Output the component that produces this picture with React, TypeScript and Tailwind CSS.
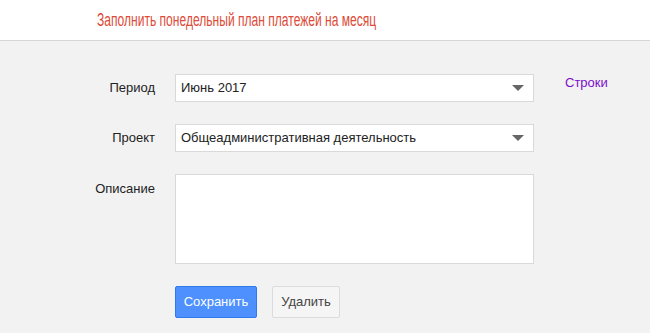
import { ReactNode } from 'react';

function Arrow() {
  return (
    <svg width="12" height="6" viewBox="0 0 12 6" className="shrink-0">
      <path d="M0 0h12L6 6z" fill="#666" />
    </svg>
  );
}

function SelectBox({ value }: { value: string }) {
  return (
    <div className="flex h-[28px] w-[359px] items-center justify-between border border-[#d9d9d9] bg-white pl-[5px] pr-[9px] text-[13px] text-[#222]">
      <span>{value}</span>
      <Arrow />
    </div>
  );
}

function Row({ label, children, labelClass = 'self-center' }: { label: string; children: ReactNode; labelClass?: string }) {
  return (
    <div className="flex items-start">
      <div className={`w-[155px] text-right text-[13px] text-[#222] ${labelClass}`}>{label}</div>
      <div className="ml-5">{children}</div>
    </div>
  );
}

export default function App() {
  return (
    <div className="min-h-[333px] bg-[#f2f2f2] font-['Liberation_Sans',Arial,sans-serif]">
      <div className="flex h-[41px] items-center border-b border-[#d6d6d6] bg-white pl-[97px]">
        {/* no condensed face installed, so squeeze the regular one */}
        <h1 className="origin-left scale-x-[0.67] whitespace-nowrap text-[18px] font-normal text-[#dd4b39]">
          Заполнить понедельный план платежей на месяц
        </h1>
      </div>

      <div className="flex flex-col gap-[22px] pt-[33px]">
        <div className="flex items-start">
          <Row label="Период">
            <SelectBox value="Июнь 2017" />
          </Row>
          <a href="#" className="ml-[31px] -mt-[1px] text-[13px] text-[#7b0ecc]">
            Строки
          </a>
        </div>

        <Row label="Проект">
          <SelectBox value="Общеадминистративная деятельность" />
        </Row>

        <Row label="Описание" labelClass="pt-[5px]">
          <textarea className="block h-[90px] w-[359px] resize-none border border-[#d9d9d9] bg-white outline-none" />
        </Row>

        <div className="flex gap-[15px] pl-[175px]">
          <button className="h-[32px] w-[82px] rounded-[2px] border border-[#3079ed] bg-[#4d90fe] text-[13px] text-white">
            Сохранить
          </button>
          <button className="h-[32px] w-[68px] rounded-[2px] border border-[#dcdcdc] bg-[#f5f5f5] text-[13px] text-[#444]">
            Удалить
          </button>
        </div>
      </div>
    </div>
  );
}
